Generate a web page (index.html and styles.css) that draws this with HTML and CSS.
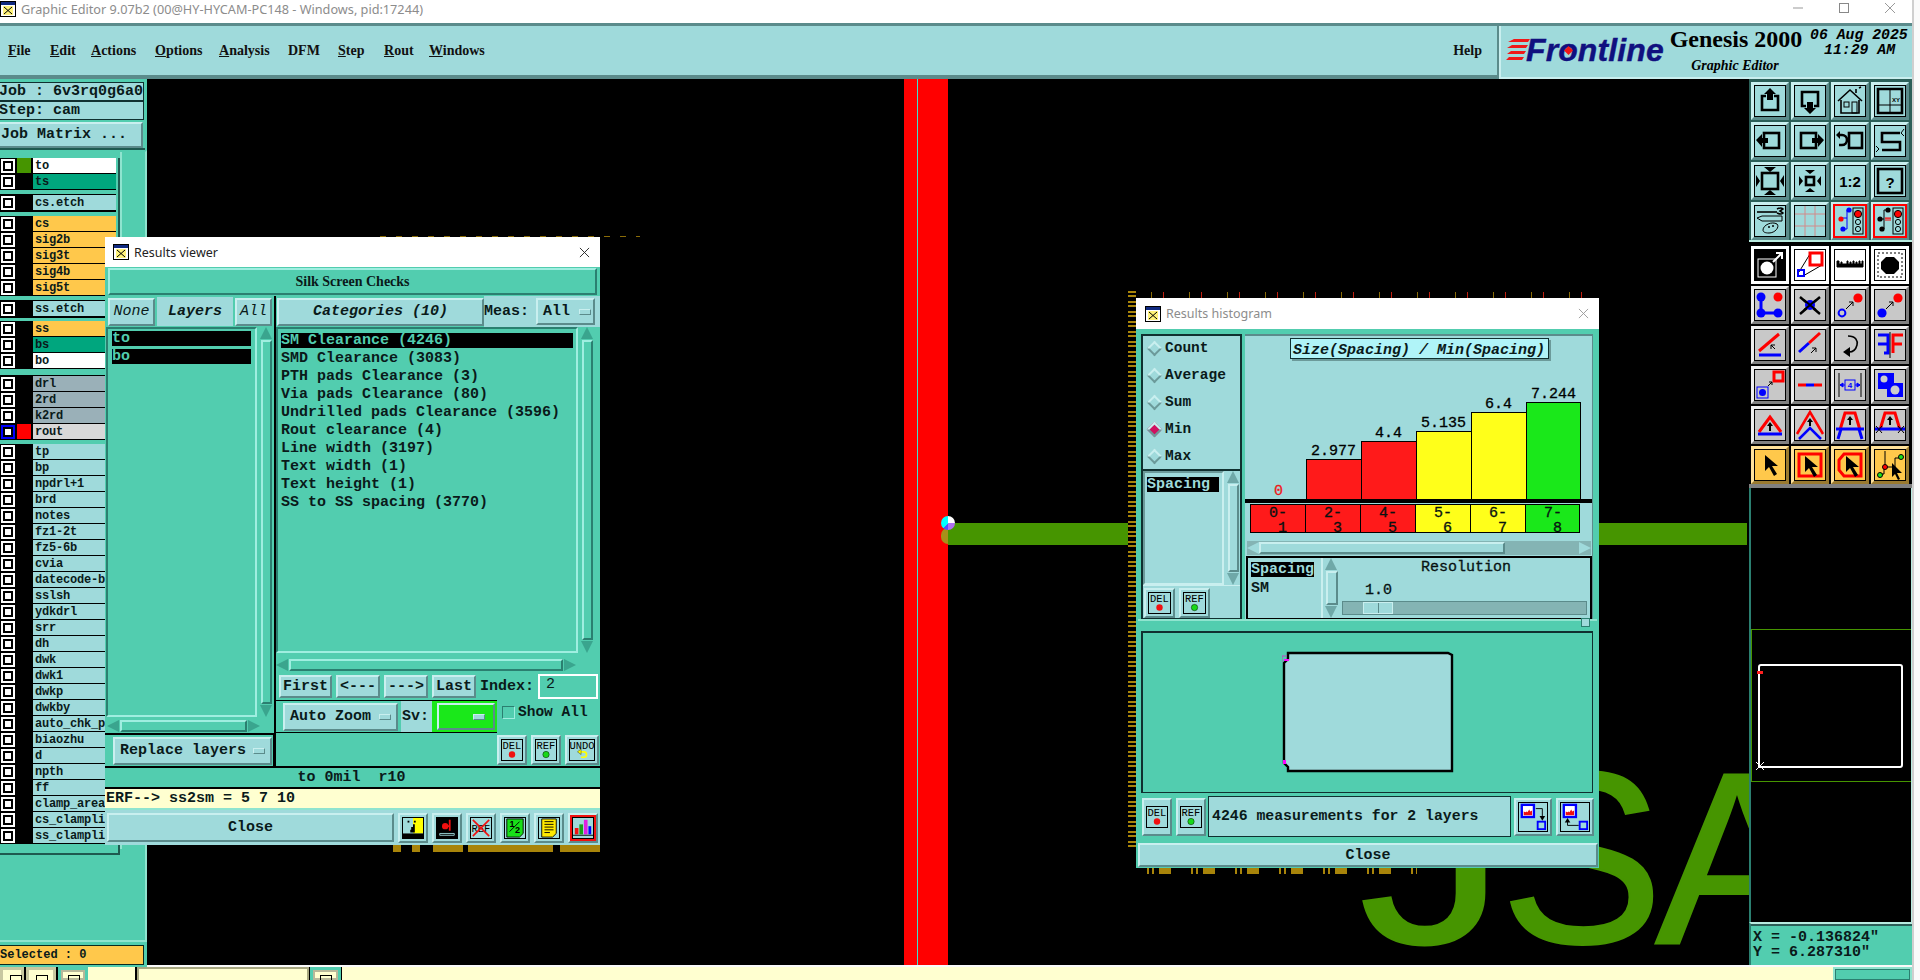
FILE: index.html
```html
<!DOCTYPE html>
<html lang="en">
<head>
<meta charset="utf-8">
<title>Graphic Editor</title>
<link rel="stylesheet" href="styles.css">
</head>
<body>
<div class="app">
  <header class="titlebar">
    <svg class="appicon" viewBox="0 0 16 16"><rect x=".5" y=".5" width="15" height="15" fill="#fff" stroke="#000"/><rect x="1" y="1" width="14" height="3" fill="#102a80"/><rect x="3" y="5" width="10" height="9" fill="#fff27a"/><path d="M4 6l8 7M12 6l-8 7" stroke="#000" fill="none"/></svg>
    <span class="apptitle">Graphic Editor 9.07b2 (00@HY-HYCAM-PC148 - Windows, pid:17244)</span>
    <div class="winbtns">
      <svg viewBox="0 0 46 14"><path d="M0 7h10" stroke="#999" fill="none"/></svg>
      <svg viewBox="0 0 46 14"><rect x=".5" y="2.500" width="9" height="9" stroke="#888" fill="none"/></svg>
      <svg viewBox="0 0 46 14"><path d="M0 2l10 10M10 2L0 12" stroke="#999" fill="none"/></svg>
    </div>
  </header>

  <div class="topbar">
    <nav class="menubar">
      <span class="mi m1"><u>F</u>ile</span>
      <span class="mi m2"><u>E</u>dit</span>
      <span class="mi m3"><u>A</u>ctions</span>
      <span class="mi m4"><u>O</u>ptions</span>
      <span class="mi m5"><u>A</u>nalysis</span>
      <span class="mi m6">DFM</span>
      <span class="mi m7"><u>S</u>tep</span>
      <span class="mi m8"><u>R</u>out</span>
      <span class="mi m9"><u>W</u>indows</span>
      <span class="mi help">Help</span>
    </nav>
    <div class="brand">
      <svg class="speed" viewBox="0 0 24 24"><path d="M8 1h16l-2 3H2zM6 7h16l-2 3H1zM5 13h15l-2 3H1zM3 19h15l-2 3H0z" fill="#f01818"/></svg>
      <span class="frontline">Fr<span class="fo">o<svg class="fodot" viewBox="0 0 8 8"><path d="M4 0l4 4-4 4-4-4z" fill="#f01818"/></svg></span>ntline</span>
      <div class="gen">
        <span class="g2000">Genesis 2000</span>
        <span class="gedit">Graphic Editor</span>
      </div>
      <div class="clock"><span>06 Aug 2025</span><span class="time">11:29 AM</span></div>
    </div>
  </div>

  <div class="middle">
    <aside class="left">
      <div class="info">Job : 6v3rq0g6a0</div>
      <div class="info">Step: cam</div>
      <div class="jobwrap"><div class="jobbtn">Job Matrix ...</div></div>
      <div class="layerpane">
        <div class="layers">
          <div class="lgroup g1">
            <div class="lr"><i class="cb"></i><i class="sw sw-green"></i><span class="ln c-white">to</span></div>
            <div class="lr"><i class="cb"></i><i class="sw"></i><span class="ln c-ts">ts</span></div>
          </div>
          <div class="lgroup g2">
            <div class="lr"><i class="cb"></i><i class="sw"></i><span class="ln c-lt">cs.etch</span></div>
          </div>
          <div class="lgroup g3">
            <div class="lr"><i class="cb"></i><i class="sw"></i><span class="ln c-or">cs</span></div>
            <div class="lr"><i class="cb"></i><i class="sw"></i><span class="ln c-or">sig2b</span></div>
            <div class="lr"><i class="cb"></i><i class="sw"></i><span class="ln c-or">sig3t</span></div>
            <div class="lr"><i class="cb"></i><i class="sw"></i><span class="ln c-or">sig4b</span></div>
            <div class="lr"><i class="cb"></i><i class="sw"></i><span class="ln c-or">sig5t</span></div>
          </div>
          <div class="lgroup g4">
            <div class="lr"><i class="cb"></i><i class="sw"></i><span class="ln c-lt">ss.etch</span></div>
          </div>
          <div class="lgroup g5">
            <div class="lr"><i class="cb"></i><i class="sw"></i><span class="ln c-or">ss</span></div>
            <div class="lr"><i class="cb"></i><i class="sw"></i><span class="ln c-ts">bs</span></div>
            <div class="lr"><i class="cb"></i><i class="sw"></i><span class="ln c-white">bo</span></div>
          </div>
          <div class="lgroup g6">
            <div class="lr"><i class="cb"></i><i class="sw"></i><span class="ln c-gr">drl</span></div>
            <div class="lr"><i class="cb"></i><i class="sw"></i><span class="ln c-gr">2rd</span></div>
            <div class="lr"><i class="cb"></i><i class="sw"></i><span class="ln c-gr">k2rd</span></div>
            <div class="lr"><i class="cb cb-blue"></i><i class="sw sw-red"></i><span class="ln c-rout">rout</span></div>
          </div>
          <div class="lgroup g7">
            <div class="lr"><i class="cb"></i><i class="sw"></i><span class="ln c-lt">tp</span></div>
            <div class="lr"><i class="cb"></i><i class="sw"></i><span class="ln c-lt">bp</span></div>
            <div class="lr"><i class="cb"></i><i class="sw"></i><span class="ln c-lt">npdrl+1</span></div>
            <div class="lr"><i class="cb"></i><i class="sw"></i><span class="ln c-lt">brd</span></div>
            <div class="lr"><i class="cb"></i><i class="sw"></i><span class="ln c-lt">notes</span></div>
            <div class="lr"><i class="cb"></i><i class="sw"></i><span class="ln c-lt">fz1-2t</span></div>
            <div class="lr"><i class="cb"></i><i class="sw"></i><span class="ln c-lt">fz5-6b</span></div>
            <div class="lr"><i class="cb"></i><i class="sw"></i><span class="ln c-lt">cvia</span></div>
            <div class="lr"><i class="cb"></i><i class="sw"></i><span class="ln c-lt">datecode-b</span></div>
            <div class="lr"><i class="cb"></i><i class="sw"></i><span class="ln c-lt">sslsh</span></div>
            <div class="lr"><i class="cb"></i><i class="sw"></i><span class="ln c-lt">ydkdrl</span></div>
            <div class="lr"><i class="cb"></i><i class="sw"></i><span class="ln c-lt">srr</span></div>
            <div class="lr"><i class="cb"></i><i class="sw"></i><span class="ln c-lt">dh</span></div>
            <div class="lr"><i class="cb"></i><i class="sw"></i><span class="ln c-lt">dwk</span></div>
            <div class="lr"><i class="cb"></i><i class="sw"></i><span class="ln c-lt">dwk1</span></div>
            <div class="lr"><i class="cb"></i><i class="sw"></i><span class="ln c-lt">dwkp</span></div>
            <div class="lr"><i class="cb"></i><i class="sw"></i><span class="ln c-lt">dwkby</span></div>
            <div class="lr"><i class="cb"></i><i class="sw"></i><span class="ln c-lt">auto_chk_p</span></div>
            <div class="lr"><i class="cb"></i><i class="sw"></i><span class="ln c-lt">biaozhu</span></div>
            <div class="lr"><i class="cb"></i><i class="sw"></i><span class="ln c-lt">d</span></div>
            <div class="lr"><i class="cb"></i><i class="sw"></i><span class="ln c-lt">npth</span></div>
            <div class="lr"><i class="cb"></i><i class="sw"></i><span class="ln c-lt">ff</span></div>
            <div class="lr"><i class="cb"></i><i class="sw"></i><span class="ln c-lt">clamp_area</span></div>
            <div class="lr"><i class="cb"></i><i class="sw"></i><span class="ln c-lt">cs_clampli</span></div>
            <div class="lr"><i class="cb"></i><i class="sw"></i><span class="ln c-lt">ss_clampli</span></div>
          </div>
        </div>
      </div>
      <div class="selected">Selected : 0</div>
    </aside>

    <main class="canvas">
      <div class="rout-band"></div>
      <div class="rout-line"></div>
      <div class="trace"></div>
      <div class="pad-gold"></div>
      <div class="pad-dot"></div>
      <span class="glyph gj">J</span>
      <span class="glyph gs">S</span>
      <span class="glyph ga">A</span>
      <div class="pcb pcb-left"></div>
      <div class="pcb pcb-top"></div>
      <div class="pcb pcb-bot"></div>
      <div class="pcb pcb-vt"></div>
      <div class="gold g-a"></div>
      <div class="gold g-b"></div>
      <div class="gold g-c"></div>
      <div class="gold g-d"></div>
      <div class="gold g-e"></div>
    </main>

    <aside class="right">
      <div class="tools t1">
        <div class="tb"><div class="fr"><svg viewBox="0 0 30 30"><path class="k3" d="M11 10H7v14h16V10h-4"/><path d="M15 2l6 6h-3v6h-6V8H9z"/></svg></div></div>
        <div class="tb"><div class="fr"><svg viewBox="0 0 30 30"><path class="k3" d="M11 20H7V6h16v14h-4"/><path d="M15 28l-6-6h3v-6h6v6h3z"/></svg></div></div>
        <div class="tb"><div class="fr"><svg viewBox="0 0 30 30"><path class="k2" d="M3 15L15 4l12 11M6 14v13h18V14M21 7V3M24 2l2-1"/><rect class="k1" x="9" y="16" width="5" height="5"/><rect class="k1" x="17" y="16" width="5" height="11"/></svg></div></div>
        <div class="tb"><div class="fr"><svg viewBox="0 0 30 30"><path class="k3" d="M3 3h24v24H3z"/><path class="k1" d="M15 3v24M3 19h24"/><text class="tiny" x="17" y="16">XY</text></svg></div></div>
        <div class="tb"><div class="fr"><svg viewBox="0 0 30 30"><rect class="k3" x="9" y="7" width="15" height="15"/><path d="M1 14l6-6v4h6v5H7v4z"/></svg></div></div>
        <div class="tb"><div class="fr"><svg viewBox="0 0 30 30"><rect class="k3" x="6" y="7" width="15" height="15"/><path d="M29 14l-6-6v4h-6v5h6v4z"/></svg></div></div>
        <div class="tb"><div class="fr"><svg viewBox="0 0 30 30"><rect class="k3" x="14" y="7" width="13" height="15"/><path class="k3" d="M3 9h4a5 5 0 0 1 0 10H4"/><path d="M1 9l4-4v8z"/></svg></div></div>
        <div class="tb"><div class="fr"><svg viewBox="0 0 30 30"><path class="k3" d="M25 7H7v9h18v8H7"/><path class="k1" d="M29 3l-3 4 3 3M1 20l3 3-3 3"/></svg></div></div>
        <div class="tb"><div class="fr"><svg viewBox="0 0 30 30"><rect class="k3" x="7" y="7" width="16" height="16"/><path d="M15 6l-6-5h12zM15 24l-6 5h12zM5 15L1 9v12zM25 15l4-6v12z"/></svg></div></div>
        <div class="tb"><div class="fr"><svg viewBox="0 0 30 30"><rect class="k3" x="11" y="11" width="8" height="8"/><path d="M15 8l-5-4h10zM15 22l-5 4h10zM8 15L4 10v10zM22 15l4-5v10z"/></svg></div></div>
        <div class="tb"><div class="fr"><svg viewBox="0 0 30 30"><text class="ratio" x="15" y="21">1:2</text></svg></div></div>
        <div class="tb"><div class="fr"><svg viewBox="0 0 30 30"><rect class="k3" x="3" y="3" width="24" height="24"/><text class="ratio" x="15" y="22">?</text></svg></div></div>
        <div class="tb"><div class="fr"><svg viewBox="0 0 30 30"><path class="k2" d="M2 6h20"/><path class="k2" d="M22 3c4-2 6 0 6 0l-3 2 3 2s-2 2-6 0"/><path class="k1" d="M27 10v5H7L2 12l5-2z"/><path class="k1" d="M8 24c0-5 9-9 14-6 3 3-2 9-8 9-4 0-6-1-6-3z"/><circle cx="14" cy="21" r="1"/><circle cx="18" cy="20" r="1"/></svg></div></div>
        <div class="tb"><div class="fr"><svg viewBox="0 0 30 30"><path d="M0 8h30M0 20h30M10 0v30M20 0v30" stroke="#d28a8a" fill="none"/></svg></div></div>
        <div class="tb tb-red"><div class="fr"><svg viewBox="0 0 30 30"><path d="M7 12h5V4h2M12 12v11H8" fill="none" stroke="#0000ff"/><circle cx="14" cy="4" r="2.600" fill="#00f"/><circle cx="8" cy="23" r="2.600" fill="#00f"/><circle cx="6" cy="13" r="2.600" fill="#f00"/><rect class="k1" x="18" y="2" width="10" height="26"/><circle cx="23" cy="8" r="3.600" fill="#f00" stroke="#000"/><circle class="k1" cx="23" cy="16" r="2.600"/><circle class="k1" cx="23" cy="23" r="2.600"/></svg></div></div>
        <div class="tb tb-red"><div class="fr"><svg viewBox="0 0 30 30"><path class="k1" d="M5 13h4V4h4M9 13v10H7"/><path d="M10 12h6M11 12v3M13 12v3M15 12v3" stroke="#f00" fill="none"/><circle cx="13" cy="4" r="2.600"/><circle cx="7" cy="23" r="2.600"/><circle cx="5" cy="13" r="2.600"/><rect class="k1" x="18" y="2" width="10" height="26"/><circle cx="23" cy="8" r="3.600" fill="#f00" stroke="#000"/><circle class="k1" cx="23" cy="16" r="2.600"/><circle class="k1" cx="23" cy="23" r="2.600"/></svg></div></div>
      </div>
      <div class="tools t2">
        <div class="tb tb-w"><div class="fr fr-k"><svg viewBox="0 0 30 30"><rect x="3" y="9" width="18" height="18" fill="none" stroke="#fff"/><circle cx="12" cy="18" r="6.500" fill="#fff"/><path d="M18 12l8-8M21 3h6v6" fill="none" stroke="#fff" stroke-width="2"/></svg></div></div>
        <div class="tb tb-w"><div class="fr"><svg viewBox="0 0 30 30"><path class="k1" d="M4 22L15 4M8 26l19-11"/><rect x="15" y="3" width="12" height="12" fill="none" stroke="#f00" stroke-width="3"/><rect x="3" y="20" width="6" height="6" fill="none" stroke="#00f" stroke-width="2"/></svg></div></div>
        <div class="tb tb-w"><div class="fr"><svg viewBox="0 0 30 30"><path d="M2 11v6h26v-6h-1v3h-2v-3h-1v3h-2v-2h-1v2h-2v-3h-1v3h-2v-2h-1v2h-2v-3h-1v3H7v-2H6v2H4v-3z" stroke="#000" stroke-width="1"/></svg></div></div>
        <div class="tb tb-w"><div class="fr"><svg viewBox="0 0 30 30"><rect x="3" y="3" width="24" height="24" fill="none" stroke="#000" stroke-dasharray="2 2"/><path d="M11 7h8l5 5v7l-5 5h-8l-5-5v-7z"/></svg></div></div>

        <div class="tb tb-g"><div class="fr"><svg viewBox="0 0 30 30"><path d="M6 6v17h17" fill="none" stroke="#00f" stroke-width="3"/><circle cx="6" cy="7" r="4.500" fill="#00f"/><circle cx="6" cy="23" r="4.500" fill="#00f"/><circle cx="23" cy="23" r="4.500" fill="#00f"/><circle cx="23" cy="7" r="4.500" fill="#f00"/></svg></div></div>
        <div class="tb tb-g"><div class="fr"><svg viewBox="0 0 30 30"><path d="M5 7l20 17M25 7L5 24" stroke="#000" stroke-width="2.400"/><circle cx="15" cy="15" r="5" fill="#00f"/><path d="M9 10l12 10M21 10L9 20" stroke="#000" stroke-width="2"/></svg></div></div>
        <div class="tb tb-g"><div class="fr"><svg viewBox="0 0 30 30"><circle cx="23" cy="8" r="4.600" fill="#f00"/><circle cx="7" cy="23" r="3.400" fill="none" stroke="#00f" stroke-width="2"/><path class="k1" d="M11 19l7-7M14 12h4v4"/></svg></div></div>
        <div class="tb tb-g"><div class="fr"><svg viewBox="0 0 30 30"><circle cx="23" cy="8" r="4.600" fill="#f00"/><circle cx="7" cy="23" r="4.600" fill="#00f"/><path class="k1" d="M11 19l7-7M14 12h4v4"/></svg></div></div>

        <div class="tb tb-g"><div class="fr"><svg viewBox="0 0 30 30"><path d="M4 21L24 4" stroke="#f00" stroke-width="3"/><path d="M4 25h22" stroke="#00f" stroke-width="3"/><path class="k1" d="M20 19l-4-4M16 19v-4h4"/></svg></div></div>
        <div class="tb tb-g"><div class="fr"><svg viewBox="0 0 30 30"><path d="M4 22l10-9" stroke="#00f" stroke-width="3"/><path d="M14 13L25 3" stroke="#f00" stroke-width="3"/><path class="k1" d="M16 23l5-5M17 18h4v4"/></svg></div></div>
        <div class="tb tb-g"><div class="fr"><svg viewBox="0 0 30 30"><path class="k2" d="M13 6c8 0 10 5 9 9-1 4-4 7-8 7"/><path d="M8 22l7-5v10z"/></svg></div></div>
        <div class="tb tb-g"><div class="fr"><svg viewBox="0 0 30 30"><path d="M3 5h10v18H9M3 14h10" fill="none" stroke="#00f" stroke-width="3"/><path d="M15 2v26" stroke="#000"/><path d="M18 23V5h10M18 14h9" fill="none" stroke="#f00" stroke-width="3"/></svg></div></div>

        <div class="tb tb-g"><div class="fr"><svg viewBox="0 0 30 30"><rect x="19" y="2" width="9" height="9" fill="#ccc" stroke="#f00" stroke-width="3"/><rect x="2" y="17" width="11" height="11" fill="none" stroke="#00f"/><circle cx="7.500" cy="22.500" r="3.500" fill="#00f"/><path class="k1" d="M13 16l4-4M14 12h3v3"/></svg></div></div>
        <div class="tb tb-g"><div class="fr"><svg viewBox="0 0 30 30"><path d="M3 15h8" stroke="#f00" stroke-width="3"/><path d="M11 15h8" stroke="#00f" stroke-width="3"/><path d="M19 15h8" stroke="#f00" stroke-width="3"/></svg></div></div>
        <div class="tb tb-g"><div class="fr"><svg viewBox="0 0 30 30"><path d="M4 3v24M26 3v24" stroke="#000"/><path d="M5 15h5M20 15h5M5 15l3-2v4zM25 15l-3-2v4z" stroke="#00f" fill="#00f"/><rect x="10" y="10" width="10" height="10" fill="none" stroke="#00f"/><text class="tinyb" x="15" y="18">4</text></svg></div></div>
        <div class="tb tb-g"><div class="fr"><svg viewBox="0 0 30 30"><path d="M3 3h16v10h9v14H12v-8H3z" fill="#00f"/><circle cx="9" cy="9" r="3.500" fill="#ccc"/><circle cx="20" cy="20" r="4.500" fill="#ccc"/></svg></div></div>

        <div class="tb tb-g"><div class="fr"><svg viewBox="0 0 30 30"><path d="M4 22L15 7l11 15" fill="none" stroke="#f00" stroke-width="3"/><path d="M3 24h24" stroke="#00f" stroke-width="3"/><path d="M15 12l-3 4h2v5h2v-5h2z"/></svg></div></div>
        <div class="tb tb-g"><div class="fr"><svg viewBox="0 0 30 30"><path d="M2 24L15 2l13 22" fill="none" stroke="#f00" stroke-width="2.500"/><path d="M4 29l11-11 11 11" fill="none" stroke="#00f" stroke-width="2.500"/><path d="M15 8l-3 4h2v4h2v-4h2z"/></svg></div></div>
        <div class="tb tb-g"><div class="fr"><svg viewBox="0 0 30 30"><path d="M5 20L10 3h10l5 17" fill="none" stroke="#f00" stroke-width="3"/><path d="M1 19h28" stroke="#00f" stroke-width="3"/><path d="M3 29l3-10M27 29l-3-10" stroke="#00f" stroke-width="3"/><path d="M15 6l-3 4h2v5h2v-5h2z"/></svg></div></div>
        <div class="tb tb-g"><div class="fr"><svg viewBox="0 0 30 30"><path d="M5 20L10 3h10l5 17" fill="none" stroke="#f00" stroke-width="3"/><path d="M0 19h30" stroke="#00f" stroke-width="3"/><path class="k1" d="M1 16l6 7M7 16l-6 7M23 16l6 7M29 16l-6 7"/><path d="M15 6l-3 4h2v5h2v-5h2z"/></svg></div></div>

        <div class="tb tb-o"><div class="fr"><svg viewBox="0 0 30 30"><path d="M10 5v16l4-4 5 9 3-2-5-8h6z"/></svg></div></div>
        <div class="tb tb-o"><div class="fr"><svg viewBox="0 0 30 30"><rect x="4" y="4" width="22" height="22" fill="none" stroke="#f00" stroke-width="3"/><path d="M10 6v16l4-4 5 9 3-2-5-8h6z"/></svg></div></div>
        <div class="tb tb-o"><div class="fr"><svg viewBox="0 0 30 30"><path d="M9 4h17v22H9l-5-6V10z" fill="none" stroke="#f00" stroke-width="3"/><path d="M11 6v16l4-4 5 9 3-2-5-8h6z"/></svg></div></div>
        <div class="tb tb-o"><div class="fr"><svg viewBox="0 0 30 30"><path class="k1" d="M10 1v16M5 24h4v-7h11V8h6"/><circle cx="10" cy="17" r="2.500" fill="#f00" stroke="#000"/><circle cx="5" cy="25" r="2.500" fill="#1ae01a" stroke="#000"/><circle cx="26" cy="7" r="2.500" fill="#1ae01a" stroke="#000"/><path d="M17 13v14l3-3 3 6 2-1-3-6h5z"/></svg></div></div>
      </div>
      <div class="overview">
        <div class="ov-box"><div class="ov-board"><i class="ov-mark"></i><svg class="ov-x" viewBox="0 0 8 8"><path d="M0 0l8 8M8 0L0 8" stroke="#fff" fill="none"/></svg></div></div>
      </div>
      <div class="coords"><div>X = -0.136824"</div><div>Y = 6.287310"</div></div>
    </aside>
  </div>

  <footer class="bottom">
    <div class="bbtn w1"><i></i></div>
    <div class="bbtn w2"><i></i></div>
    <div class="bbtn w3 teal"><i></i></div>
    <div class="bcream w4"></div>
    <div class="binput"></div>
    <div class="bbtn w5 teal"><i></i></div>
    <div class="bcream grow"></div>
    <div class="bteal"></div>
  </footer>
</div>

<section class="win rv">
  <div class="wintitle">
    <svg class="appicon" viewBox="0 0 16 16"><rect x=".5" y=".5" width="15" height="15" fill="#fff" stroke="#000"/><rect x="1" y="1" width="14" height="3" fill="#102a80"/><rect x="3" y="5" width="10" height="9" fill="#fff27a"/><path d="M4 6l8 7M12 6l-8 7" stroke="#000" fill="none"/></svg>
    <span class="wt-text active">Results viewer</span>
    <svg class="winx" viewBox="0 0 12 12"><path d="M1 1l10 10M11 1L1 11" stroke="#222" fill="none"/></svg>
  </div>
  <div class="banner">Silk Screen Checks</div>
  <div class="rv-mid">
    <div class="rv-l">
      <div class="rv-head">
        <button class="btn it none">None</button>
        <span class="rv-layers">Layers</span>
        <button class="btn it all">All</button>
      </div>
      <div class="rv-listwrap">
        <div class="list rvlist-l">
          <div class="sel">to</div>
          <div class="sel">bo</div>
        </div>
        <div class="vs"><i class="au"></i><b></b><i class="ad"></i></div>
      </div>
      <div class="hs hs-l"><i class="al"></i><b></b><i class="ar"></i></div>
      <div class="replace"><button class="btn repl">Replace layers<i class="dd"></i></button></div>
    </div>
    <div class="rv-r">
      <div class="rv-head2">
        <button class="btn it cats">Categories (10)</button>
        <span class="meas">Meas:</span>
        <button class="btn ddb">All<i class="dd"></i></button>
      </div>
      <div class="rv-listwrap2">
        <div class="list rvlist-r">
          <div class="sel wide">SM Clearance (4246)</div>
          <div class="it-row">SMD Clearance (3083)</div>
          <div class="it-row">PTH pads Clearance (3)</div>
          <div class="it-row">Via pads Clearance (80)</div>
          <div class="it-row">Undrilled pads Clearance (3596)</div>
          <div class="it-row">Rout clearance (4)</div>
          <div class="it-row">Line width (3197)</div>
          <div class="it-row">Text width (1)</div>
          <div class="it-row">Text height (1)</div>
          <div class="it-row">SS to SS spacing (3770)</div>
        </div>
        <div class="vs"><i class="au"></i><b></b><i class="ad"></i></div>
      </div>
      <div class="hs hs-r"><i class="al"></i><b></b><i class="ar"></i></div>
      <div class="navrow">
        <button class="btn nav">First</button>
        <button class="btn nav">&lt;---</button>
        <button class="btn nav">---&gt;</button>
        <button class="btn nav">Last</button>
        <span class="idx">Index:</span>
        <span class="idxval">2</span>
      </div>
      <div class="zoomrow">
        <div class="zoomgroup">
          <button class="btn azoom">Auto Zoom<i class="dd"></i></button>
          <span class="sv">Sv:</span>
          <div class="svgreen"><button class="btn svbtn"><i class="dd"></i></button></div>
        </div>
        <label class="showall"><i class="chk"></i>Show All</label>
      </div>
      <div class="actrow">
        <div class="ib"><div class="fr fr-s"><svg viewBox="0 0 22 22"><text class="lbl" x="11" y="10">DEL</text><circle cx="11" cy="16" r="3.500" fill="#f01010"/></svg></div></div>
        <div class="ib"><div class="fr fr-s"><svg viewBox="0 0 22 22"><text class="lbl" x="11" y="10">REF</text><circle cx="11" cy="16" r="3.500" fill="#18d818" stroke="#000" stroke-width=".5"/></svg></div></div>
        <div class="ib ib-w"><div class="fr fr-w"><svg viewBox="0 0 26 22"><text class="lbl" x="13" y="10">UNDO</text><path d="M10 13h5a3 3 0 0 1 0 6h-3" fill="none" stroke="#ff0" stroke-width="1.800"/><path d="M12 10l-4 3 4 3z" fill="#ff0" stroke="#000" stroke-width=".4"/></svg></div></div>
      </div>
    </div>
  </div>
  <div class="statusrow">to 0mil&nbsp;&nbsp;r10</div>
  <div class="erfrow">ERF--&gt; ss2sm = 5 7 10</div>
  <div class="closerow">
    <button class="btn closebtn">Close</button>
    <div class="ib"><div class="fr fr-s"><svg viewBox="0 0 22 22"><rect x="0" y="0" width="11" height="17" fill="#a0dcdc"/><rect x="11" y="0" width="11" height="17" fill="#ff0"/><rect x="0" y="17" width="22" height="5"/><path d="M8 16h5V7h-2v3H9v3H8z"/><rect x="5" y="3" width="2" height="2"/><rect x="12" y="3" width="2" height="2"/></svg></div></div>
    <div class="ib"><div class="fr fr-s fr-ink"><svg viewBox="0 0 22 22"><rect x="3" y="2" width="16" height="13" fill="none"/><circle cx="9" cy="9" r="3.500" fill="#f01010"/><path d="M9 9h5M14 2v12" stroke="#f01010" stroke-width="2"/><path d="M3 17h16v2H3z" fill="none" stroke="#9fdadb"/></svg></div></div>
    <div class="ib"><div class="fr fr-s"><svg viewBox="0 0 22 22"><text class="lbl" x="11" y="15">REF</text><path d="M2 2l18 18M20 2L2 20" stroke="#f01010" stroke-width="1.800"/></svg></div></div>
    <div class="ib"><div class="fr fr-s"><svg viewBox="0 0 22 22"><path d="M2 1h18v16l-4 4H2z" fill="#18e018" stroke="#000"/><text class="half" x="5" y="10">1</text><text class="half" x="11" y="16">2</text><path d="M5 15L16 4" stroke="#000"/></svg></div></div>
    <div class="ib"><div class="fr fr-s"><svg viewBox="0 0 22 22"><path d="M3 1h16v16l-4 4H3z" fill="#ffea00" stroke="#000"/><path d="M6 4h10M6 7h10M6 10h10M6 13h10M6 16h6" stroke="#000"/></svg></div></div>
    <div class="ib ib-red"><div class="fr fr-s fr-redb"><svg viewBox="0 0 22 22"><rect x="2" y="11" width="4" height="7" fill="#f01010"/><rect x="7" y="7" width="4" height="11" fill="#18a018"/><rect x="12" y="2" width="4" height="16" fill="#e020e0"/><rect x="17" y="9" width="3" height="9" fill="#00f"/><path d="M0 19h22" stroke="#000"/></svg></div></div>
  </div>
</section>

<section class="win rh">
  <div class="wintitle tall">
    <svg class="appicon big" viewBox="0 0 16 16"><rect x=".5" y=".5" width="15" height="15" fill="#fff" stroke="#000"/><rect x="1" y="1" width="14" height="3" fill="#102a80"/><rect x="3" y="5" width="10" height="9" fill="#fff27a"/><path d="M4 6l8 7M12 6l-8 7" stroke="#000" fill="none"/></svg>
    <span class="wt-text">Results histogram</span>
    <svg class="winx" viewBox="0 0 12 12"><path d="M1 1l10 10M11 1L1 11" stroke="#999" fill="none"/></svg>
  </div>
  <div class="rh-top">
    <div class="rh-left">
      <div class="radios">
        <div class="radio"><i class="dia"></i>Count</div>
        <div class="radio"><i class="dia"></i>Average</div>
        <div class="radio"><i class="dia"></i>Sum</div>
        <div class="radio"><i class="dia on"></i>Min</div>
        <div class="radio"><i class="dia"></i>Max</div>
      </div>
      <div class="rh-listwrap">
        <div class="rh-list"><span class="selh">Spacing</span></div>
        <div class="vs lt"><i class="au"></i><b></b><i class="ad"></i></div>
      </div>
      <div class="rh-btns">
        <div class="ib lt"><div class="fr fr-s"><svg viewBox="0 0 22 22"><text class="lbl" x="11" y="10">DEL</text><circle cx="11" cy="16" r="3.500" fill="#f01010"/></svg></div></div>
        <div class="ib lt"><div class="fr fr-s"><svg viewBox="0 0 22 22"><text class="lbl" x="11" y="10">REF</text><circle cx="11" cy="16" r="3.500" fill="#18d818" stroke="#000" stroke-width=".5"/></svg></div></div>
      </div>
    </div>
    <div class="rh-chart">
      <div class="chart-title">Size(Spacing) / Min(Spacing)</div>
      <div class="bars">
        <div class="barcol"><span class="bv zero">0</span></div>
        <div class="barcol"><span class="bv">2.977</span><div class="bar red" style="height:40px"></div></div>
        <div class="barcol"><span class="bv">4.4</span><div class="bar red" style="height:58px"></div></div>
        <div class="barcol"><span class="bv">5.135</span><div class="bar yel" style="height:68px"></div></div>
        <div class="barcol"><span class="bv">6.4</span><div class="bar yel" style="height:87px"></div></div>
        <div class="barcol"><span class="bv">7.244</span><div class="bar grn" style="height:97px"></div></div>
      </div>
      <div class="bins">
        <div class="bin red"><span>0-</span><span class="n2">1</span></div>
        <div class="bin red"><span>2-</span><span class="n2">3</span></div>
        <div class="bin red"><span>4-</span><span class="n2">5</span></div>
        <div class="bin yel"><span>5-</span><span class="n2">6</span></div>
        <div class="bin yel"><span>6-</span><span class="n2">7</span></div>
        <div class="bin grn"><span>7-</span><span class="n2">8</span></div>
      </div>
      <div class="hs hs-h"><i class="al"></i><b></b><u></u><i class="ar"></i></div>
      <div class="rh-sub">
        <div class="rh-slist"><span class="selh">Spacing</span><span class="plain">SM</span></div>
        <div class="vs lt vs-s"><i class="au"></i><b></b><i class="ad"></i></div>
        <div class="reso">
          <div class="reso-t">Resolution</div>
          <div class="reso-v">1.0</div>
          <div class="slider"><b></b></div>
        </div>
      </div>
    </div>
  </div>
  <div class="sash"><i></i></div>
  <div class="preview">
    <svg class="board" viewBox="0 0 172 122"><path d="M6 2h160l4 2v116H6v-4l-4-4V12l4-4z" fill="#9fdadb" stroke="#000" stroke-width="2.400"/><path d="M0 11V5h5" fill="none" stroke="#c040c0"/><rect x="2" y="8" width="5" height="2" fill="#f0f"/><rect x="1" y="109" width="3" height="4" fill="#f0f"/></svg>
  </div>
  <div class="rh-status">
    <div class="ib lt"><div class="fr fr-s"><svg viewBox="0 0 22 22"><text class="lbl" x="11" y="10">DEL</text><circle cx="11" cy="16" r="3.500" fill="#f01010"/></svg></div></div>
    <div class="ib lt"><div class="fr fr-s"><svg viewBox="0 0 22 22"><text class="lbl" x="11" y="10">REF</text><circle cx="11" cy="16" r="3.500" fill="#18d818" stroke="#000" stroke-width=".5"/></svg></div></div>
    <div class="msg">4246 measurements for 2 layers</div>
    <div class="ib lt big"><div class="fr fr-b"><svg viewBox="0 0 30 30"><rect x="3" y="2" width="13" height="13" fill="#fff" stroke="#00f" stroke-width="2.500"/><path d="M5 13v-4l2 1 1-1 1 1 2-3 1 2 2-1v5z" fill="#f01010"/><path class="k1" d="M18 6h7v8"/><path d="M25 19l-3-5h6z"/><rect x="20" y="20" width="8" height="8" fill="none" stroke="#00f" stroke-width="2"/></svg></div></div>
    <div class="ib lt big"><div class="fr fr-b"><svg viewBox="0 0 30 30"><rect x="3" y="2" width="13" height="13" fill="#fff" stroke="#00f" stroke-width="2.500"/><path d="M5 13v-4l2 1 1-1 1 1 2-3 1 2 2-1v5z" fill="#f01010"/><path class="k1" d="M7 19v5h12"/><path d="M7 16l-3 5h6z"/><rect x="20" y="20" width="8" height="8" fill="none" stroke="#00f" stroke-width="2"/></svg></div></div>
  </div>
  <button class="btn hclose">Close</button>
</section>
</body>
</html>
```

FILE: styles.css
```css
* { box-sizing: border-box; }
html, body { margin: 0; padding: 0; }
body { width: 1920px; height: 980px; overflow: hidden; background: #fafafa; position: relative; font-family: "Liberation Mono", monospace; font-weight: 700; font-size: 15px; color: #0a1a1a; }
i { font-style: normal; }
.app { width: 1912px; height: 980px; display: flex; flex-direction: column; box-shadow: 2px 0 0 #cfcfcf; }

/* title bar */
.titlebar { height: 23px; background: #fff; display: flex; align-items: center; flex: none; position: relative; }
.appicon { width: 16px; height: 16px; flex: none; }
.titlebar .appicon { margin-top: -6px; }
.apptitle { margin-left: 5px; margin-top: -6px; font: 400 12.700px "Noto Sans", sans-serif; color: #8c8c8c; }
.winbtns { margin-left: auto; display: flex; width: 138px; margin-right: -19px; margin-top: -8px; flex: none; }
.winbtns svg { width: 46px; height: 14px; flex: none; }

/* menu */
.topbar { height: 56px; flex: none; display: flex; background: #5b8b8b; padding-top: 3px; }
.menubar { width: 1497px; height: 49px; background: #9fdadb; position: relative; display: flex; align-items: center; font: 700 14px "Liberation Serif", serif; color: #111; padding-left: 8px; }
.mi { flex: none; }
.m1 { width: 42px; } .m2 { width: 41px; } .m3 { width: 64px; } .m4 { width: 64px; } .m5 { width: 69px; } .m6 { width: 50px; } .m7 { width: 46px; } .m8 { width: 45px; }
.help { margin-left: auto; margin-right: 15px; }
.brand { margin-left: 2px; width: 413px; height: 53px; background: #9fdadb; border-left: 2px solid #c9efef; border-bottom: 2px solid #c9efef; position: relative; display: flex; align-items: flex-start; }
.speed { width: 24px; height: 24px; margin: 12px 0 0 5px; flex: none; }
.frontline { font: italic 700 32px/1 "Liberation Sans", sans-serif; color: #10107f; -webkit-text-stroke: .4px #10107f; margin: 8px 0 0 -4px; width: 141px; flex: none; letter-spacing: .1px; }
.fo { position: relative; display: inline-block; }
.fodot { position: absolute; left: 6px; top: 12px; width: 9px; height: 9px; }
.gen { display: flex; flex-direction: column; align-items: center; width: 138px; flex: none; }
.g2000 { font: 700 24px/26px "Liberation Serif", serif; color: #000; white-space: nowrap; }
.gedit { font: italic 700 14px/18px "Liberation Serif", serif; color: #000; margin-top: 5px; margin-left: -2px; }
.clock { display: flex; flex-direction: column; font: italic 700 14.800px/15px "Liberation Mono", monospace; color: #000; margin: 2px 0 0 5px; white-space: nowrap; }
.time { margin-left: 14px; }

/* middle */
.middle { flex: 1; min-height: 0; display: flex; }
.left { width: 147px; flex: none; background: #52cdaf; padding-top: 3px; overflow: hidden; display: flex; flex-direction: column; }
.info { width: 145px; height: 19px; flex: none; background: #9fdadb; border: 1px solid #103030; border-left: 0; font-size: 15px; line-height: 17px; margin-left: -1px; white-space: pre; }
.jobwrap { height: 30px; flex: none; border-top: 2px solid #52cdaf; border-bottom: 2px solid #1e5a50; width: 145px; }
.jobbtn { width: 143px; height: 26px; background: #9fdadb; border: 2px solid; border-color: #c9efef #5b8b8b #5b8b8b #c9efef; border-left: 0; line-height: 22px; padding-left: 1px; font-size: 15px; white-space: pre; }
.layerpane { height: 792px; flex: none; padding: 6px 0 0; border-top: 2px solid #52cdaf; border-right: 2px solid #8fe4cf; border-bottom: 2px solid #8fe4cf; position: relative; }
.layerpane::after { content: ""; position: absolute; left: 120px; top: 0; height: 697px; width: 2px; background: #8fe4cf; }
.layers { width: 120px; height: 697px; display: flex; flex-direction: column; border-right: 2px solid #1e5a50; border-bottom: 2px solid #1e5a50; }
.lgroup { background: #000; width: 116px; }
.g2 { margin-top: 4px; padding-top: 1px; }
.g3 { margin-top: 4px; }
.g4 { margin-top: 4px; padding-top: 1px; }
.g5 { margin-top: 3px; }
.g6 { margin-top: 6px; padding-top: 1px; }
.g7 { margin-top: 4px; }
.lr { height: 16px; display: grid; grid-template-columns: 17px 16px 83px; align-items: center; font-size: 12px; letter-spacing: -.2px; padding-bottom: 1px; }
.g2 .lr, .g4 .lr { height: 17px; padding-bottom: 2px; }
.cb { display: block; width: 14px; height: 14px; margin-left: 1px; border: 2px solid #fff; background: #000; padding: 2px; position: relative; }
.cb::after { content: ""; display: block; width: 6px; height: 6px; background: #fff; }
.cb-blue { border-color: #0000ff; }
.sw { display: block; width: 14px; height: 15px; }
.sw-green { background: #469500; }
.sw-red { background: #ff0000; }
.ln { display: block; height: 15px; line-height: 16px; padding-left: 2px; overflow: hidden; white-space: nowrap; }
.c-white { background: #fff; }
.c-ts { background: #00a67e; }
.c-lt { background: #9fdadb; }
.c-or { background: #ffc84b; }
.c-gr { background: #9ab0b8; }
.c-rout { background: #d8d8d8; }
.selected { height: 20px; width: 144px; flex: none; margin-top: 3px; background: #ffc84b; border: 1px solid #0a2a20; border-left: 0; font-size: 12px; line-height: 18px; white-space: pre; }

/* canvas */
.canvas { flex: 1; min-width: 0; background: #000; position: relative; overflow: hidden; margin-bottom: 2px; }
.rout-band { position: absolute; left: 757px; top: 0; bottom: 0; width: 44px; background: #ff0000; }
.rout-line { position: absolute; left: 770px; top: 0; bottom: 0; width: 1px; background: #40e0d0; }
.trace { position: absolute; left: 801px; top: 444px; width: 799px; height: 22px; background: #469500; }
.pad-gold { position: absolute; left: 794px; top: 449px; width: 7px; height: 16px; background: #a8901a; border-radius: 8px 0 0 8px; }
.pad-dot { position: absolute; left: 794px; top: 437px; width: 14px; height: 14px; border-radius: 50%; background: conic-gradient(#fff 0 25%, #b070f0 25% 50%, #5050ff 50% 62%, #00ffff 62% 100%); }
.glyph { position: absolute; top: 657px; font: 400 245px/245px "Liberation Sans", sans-serif; color: #469500; -webkit-text-stroke: 2px #469500; }
.gj { left: 1212px; transform: scaleX(1.2); transform-origin: left center; }
.gs { left: 1353px; }
.ga { left: 1508px; }
.pcb { position: absolute; }
.pcb-left { left: 981px; top: 212px; width: 8px; height: 560px; background: repeating-linear-gradient(180deg, #a8840a 0 2px, #000 2px 4px, #a8840a 4px 6px, #000 6px 10px); }
.pcb-top { left: 990px; top: 213px; width: 450px; height: 6px; background: repeating-linear-gradient(90deg, #000 0 14px, #8a6c08 14px 15px, #000 15px 26px, #c02010 26px 27px, #000 27px 38px); }
.pcb-bot { left: 1000px; top: 787px; width: 270px; height: 8px; background: repeating-linear-gradient(90deg, #a8840a 0 2px, #000 2px 5px, #a8840a 5px 7px, #000 7px 12px, #a8840a 12px 24px, #000 24px 44px); }
.pcb-vt { left: 233px; top: 157px; width: 260px; height: 1px; background: repeating-linear-gradient(90deg, #8a6c08 0 6px, #000 6px 16px); }
.gold { position: absolute; background: #a8840a; top: 766px; height: 7px; }
.g-a { left: 246px; width: 8px; }
.g-b { left: 265px; width: 8px; }
.g-c { left: 286px; width: 30px; }
.g-d { left: 321px; width: 85px; }
.g-e { left: 413px; width: 40px; }

/* right column */
.right { width: 163px; flex: none; background: #2b5f58; display: flex; flex-direction: column; margin-bottom: 2px; }
.tools { display: grid; grid-template-columns: repeat(4, 38px); grid-auto-rows: 38px; gap: 2px; padding-left: 2px; }
.t1 { padding-top: 3px; height: 163px; border-bottom: 2px solid #b8ece0; }
.t2 { background: #000; padding-top: 4px; height: 246px; border-bottom: 4px solid #808080; }
.tb { width: 38px; height: 38px; border: 3px solid; border-color: #c9efef #5b8b8b #5b8b8b #c9efef; background: #9fdadb; }
.tb-g { background: #c8c8c8; border-color: #efefef #808080 #808080 #efefef; }
.tb-w { background: #fff; border-color: #fff; }
.tb-o { background: #ffc84b; border-color: #ffe29a #9a7a30 #9a7a30 #ffe29a; }
.tb-red .fr { outline: 2px solid #ff0000; outline-offset: -1px; }
.fr { width: 100%; height: 100%; border: 1px solid #000; overflow: hidden; }
.fr svg { display: block; width: 100%; height: 100%; }
.fr-k { background: #000; }
.k1 { fill: none; stroke: #000; stroke-width: 1; }
.k2 { fill: none; stroke: #000; stroke-width: 1.600; }
.k3 { fill: none; stroke: #000; stroke-width: 2.600; }
.tiny { font: 700 6px "Liberation Sans", sans-serif; }
.tinyb { font: 700 8px "Liberation Sans", sans-serif; fill: #00f; text-anchor: middle; }
.ratio { font: 700 15px "Liberation Sans", sans-serif; text-anchor: middle; }
.overview { height: 434px; flex: none; background: #000; border-left: 2px solid #2b7f70; border-right: 1px solid #b8ece0; padding-top: 141px; }
.ov-box { height: 153px; border-top: 1px solid #469500; border-bottom: 1px solid #469500; border-left: 1px solid #469500; padding: 34px 8px 0 6px; }
.ov-board { height: 104px; border: 2px solid #fff; border-radius: 3px 3px 3px 0; position: relative; }
.ov-mark { position: absolute; left: -3px; top: 5px; width: 6px; height: 3px; background: #ff2020; }
.ov-x { position: absolute; left: -4px; bottom: -4px; width: 8px; height: 8px; }
.coords { flex: 1; background: #52cdaf; border-top: 2px solid #b8ece0; box-shadow: inset 0 2px 0 #2b5f58; border-left: 2px solid #2b7f70; padding: 7px 0 0 2px; font-size: 15px; line-height: 14.500px; white-space: pre; }

/* bottom strip */
.bottom { height: 13px; flex: none; display: flex; background: #000; overflow: hidden; }
.bbtn { height: 13px; background: #ffffd0; border: 3px solid #c8c8a0; border-bottom: 0; position: relative; flex: none; }
.bbtn i { position: absolute; left: 7px; top: 5px; width: 12px; height: 6px; border: 1px solid #000; }
.w1 { width: 24px; margin-right: 2px; }
.w2 { width: 30px; margin-right: 2px; }
.w3 { width: 30px; }
.w5 { width: 31px; margin: 0 1px; }
.teal { border-color: #52cdaf; box-shadow: inset 0 0 0 2px #b8b89a; }
.bcream { height: 13px; background: #ffffd0; flex: none; }
.w4 { width: 47px; }
.binput { width: 172px; height: 13px; flex: none; background: #ffffd0; border: 2px solid #a8a880; border-bottom: 0; margin-left: 2px; }
.bcream.grow { flex: 1; }
.bteal { width: 79px; flex: none; height: 13px; background: #52cdaf; border: 2px solid #8fe4cf; border-bottom: 0; box-shadow: inset 0 0 0 1px #2b7f70; }

/* windows */
.win { position: absolute; background: #52cdaf; display: flex; flex-direction: column; }
.rv { left: 105px; top: 237px; width: 495px; height: 608px; }
.rh { left: 1136px; top: 298px; width: 463px; height: 570px; }
.wintitle { height: 30px; flex: none; background: #fff; display: flex; align-items: center; padding-left: 8px; }
.wintitle.tall { height: 31px; padding-left: 9px; }
.appicon.big { width: 16px; height: 16px; }
.wt-text { margin-left: 5px; font: 400 12.500px "Noto Sans", sans-serif; color: #8c8c8c; }
.wt-text.active { color: #222; }
.winx { width: 11px; height: 11px; margin-left: auto; margin-right: 10px; }
.btn { display: flex; align-items: center; justify-content: center; padding: 0; margin: 0; font: 700 15px "Liberation Mono", monospace; color: #0a1a1a; background: #9fdadb; border: 2px solid; border-color: #c9efef #5b8b8b #5b8b8b #c9efef; white-space: pre; flex: none; }
.it { font-style: italic; }
.dd { display: block; width: 12px; height: 6px; background: #9fdadb; border: 1px solid; border-color: #c9efef #5b8b8b #5b8b8b #c9efef; flex: none; }
.banner { height: 27px; margin: 1px 3px 0; flex: none; background: #52cdaf; border: 2px solid; border-color: #9feee0 #2b7f70 #2b7f70 #9feee0; text-align: center; font: 700 14px/23px "Liberation Serif", serif; color: #0a1a1a; }
.rv-mid { display: flex; height: 472px; flex: none; margin-top: 1px; border-bottom: 2px solid #000; }
.rv-l { width: 168px; flex: none; display: flex; flex-direction: column; }
.rv-head { height: 31px; flex: none; display: flex; align-items: center; padding: 0 0 0 3px; background: #52cdaf; }
.none { width: 47px; height: 28px; font-weight: 400; font-size: 15px; }
.all { width: 37px; height: 28px; font-weight: 400; margin-left: 2px; }
.rv-layers { width: 76px; height: 29px; margin-left: 2px; background: #9fdadb; font-style: italic; text-align: center; line-height: 29px; }
.rv-listwrap { height: 390px; flex: none; display: flex; padding-left: 1px; }
.list { border: 2px solid; border-color: #2b7f70 #9feee0 #9feee0 #2b7f70; background: #52cdaf; overflow: hidden; }
.rvlist-l { width: 155px; padding: 2px 4px; }
.sel { height: 15px; background: #000; color: #52cdaf; line-height: 16px; margin-bottom: 3px; white-space: pre; }
.vs { width: 13px; margin-left: 3px; display: flex; flex-direction: column; background: #52cdaf; flex: none; }
.vs b { flex: 1; display: block; margin: 1px; border: 2px solid; border-color: #9feee0 #2b7f70 #2b7f70 #9feee0; }
.vs i, .hs i { display: block; flex: none; width: 12px; height: 12px; background: #3aa58e; }
.au { clip-path: polygon(50% 0, 100% 100%, 0 100%); }
.ad { clip-path: polygon(0 0, 100% 0, 50% 100%); }
.al { clip-path: polygon(0 50%, 100% 0, 100% 100%); }
.ar { clip-path: polygon(0 0, 100% 50%, 0 100%); }
.vs.lt { background: #9fdadb; }
.vs.lt b { border-color: #c9efef #5b8b8b #5b8b8b #c9efef; }
.vs.lt i { background: #6fa8a8; }
.hs { height: 14px; flex: none; display: flex; align-items: center; margin-top: 2px; }
.hs b { flex: 1; display: block; height: 12px; border: 2px solid; border-color: #9feee0 #2b7f70 #2b7f70 #9feee0; margin: 0 1px; }
.hs-l { width: 153px; margin-left: 2px; }
.replace { flex: 1; display: flex; align-items: center; padding-left: 8px; border-top: 2px solid #000; border-right: 2px solid #000; background: #52cdaf; width: 170px; }
.repl { width: 159px; height: 28px; gap: 7px; }
.rv-r { flex: 1; min-width: 0; border-left: 2px solid #000; margin-left: 1px; display: flex; flex-direction: column; }
.rv-head2 { height: 31px; flex: none; display: flex; align-items: center; padding: 0 0 0 1px; background: linear-gradient(90deg, #52cdaf 208px, #9fdadb 208px); }
.cats { width: 207px; height: 28px; }
.meas { width: 52px; text-align: left; }
.ddb { width: 59px; height: 27px; justify-content: flex-start; padding-left: 5px; gap: 9px; }
.rv-listwrap2 { height: 326px; flex: none; display: flex; }
.rvlist-r { width: 302px; padding: 4px 3px; }
.sel.wide { margin-bottom: 3px; }
.it-row { height: 18px; line-height: 16px; white-space: pre; }
.hs-r { width: 300px; margin-top: 5px; }
.navrow { height: 28px; flex: none; display: flex; align-items: center; gap: 4px; padding-left: 3px; }
.navrow .nav { width: 44px; height: 23px; }
.navrow .nav:first-child { width: 53px; }
.idx { width: 54px; }
.idxval { width: 60px; height: 25px; border: 2px solid #fff; font-weight: 400; padding-left: 6px; line-height: 17px; }
.zoomrow { height: 33px; flex: none; display: flex; }
.zoomgroup { width: 221px; flex: none; display: flex; align-items: center; border: 1px solid #000; border-left: 0; background: #52cdaf; padding-left: 7px; }
.azoom { width: 115px; height: 28px; gap: 8px; }
.sv { height: 31px; width: 31px; margin-left: 3px; background: #9fdadb; line-height: 31px; padding-left: 1px; flex: none; }
.svgreen { width: 65px; height: 31px; background: #1ae81a; padding: 2px 0 2px 5px; flex: none; }
.svbtn { width: 58px; height: 27px; background: #1ae81a; justify-content: flex-end; padding-right: 8px; }
.showall { display: flex; align-items: flex-start; padding: 6px 0 0 5px; gap: 3px; font-size: 14.500px; line-height: 13px; white-space: pre; }
.chk { width: 13px; height: 13px; border: 1px solid; border-color: #2b7f70 #9feee0 #9feee0 #2b7f70; flex: none; }
.actrow { flex: 1; display: flex; justify-content: flex-end; align-items: center; gap: 4px; padding-right: 1px; }
.ib { width: 30px; height: 30px; border: 2px solid; border-color: #c9efef #5b8b8b #5b8b8b #c9efef; background: #9fdadb; padding: 2px; flex: none; }
.ib-w { width: 34px; }
.fr-s, .fr-w, .fr-b { width: 100%; height: 100%; }
.fr-ink { background: #000; }
.fr-redb { outline: 2px solid #f01010; }
.lbl { font: 400 11.500px "Liberation Mono", monospace; text-anchor: middle; fill: #000; }
.half { font: 700 10px "Liberation Sans", sans-serif; }
.statusrow { height: 21px; flex: none; text-align: center; line-height: 19px; font-size: 15px; padding-right: 2px; border-bottom: 2px solid #000; white-space: pre; }
.erfrow { height: 19px; flex: none; background: #ffffd0; padding-left: 1px; line-height: 19px; white-space: pre; }
.closerow { flex: 1; display: flex; align-items: center; gap: 4px; padding: 0 2px; background: #9fdadb; border-top: 2px solid #8fe4cf; }
.closebtn { width: 287px; height: 29px; }

/* histogram */
.rh-top { height: 291px; flex: none; display: flex; padding: 5px 6px 0 5px; }
.rh-left { width: 101px; height: 286px; flex: none; border: 2px solid #103030; background: #9fdadb; display: flex; flex-direction: column; }
.radios { height: 135px; flex: none; border-bottom: 2px solid #103030; }
.radio { height: 27px; display: flex; align-items: center; padding: 0 0 3px 5px; gap: 5px; font-size: 14.500px; white-space: pre; }
.dia { width: 11px; height: 11px; margin: 0 0 0 1px; transform: rotate(45deg); flex: none; border: 2px solid; border-color: #c9efef #6c9a9a #6c9a9a #c9efef; background: #9fdadb; }
.dia.on { background: #d01060; }
.rh-listwrap { height: 114px; flex: none; display: flex; }
.rh-list { width: 81px; border: 2px solid; border-color: #6c9a9a #c9efef #c9efef #6c9a9a; padding: 3px 2px; }
.selh { display: inline-block; height: 15px; background: #000; color: #9fdadb; line-height: 15px; width: 72px; white-space: pre; }
.rh-btns { flex: 1; display: flex; gap: 4px; padding: 2px 0 0 1px; align-items: flex-start; border-top: 1px solid #c9efef; }
.rh-btns .ib.lt { width: 31px; height: 30px; padding: 2px; }
.rh-chart { width: 348px; margin-left: 3px; height: 286px; flex: none; background: #9fdadb; border-top: 2px solid #5b8b8b; border-right: 1px solid #5b8b8b; display: flex; flex-direction: column; position: relative; }
.chart-title { width: 259px; height: 21px; flex: none; margin: 2px 0 0 45px; background: #b0f4f8; border: 1px solid #103030; box-shadow: 2px 2px 0 #6c9a9a; font-style: italic; font-size: 15px; line-height: 23px; padding-left: 2px; white-space: pre; overflow: hidden; }
.bars { height: 140px; flex: none; display: flex; padding-left: 6px; align-items: stretch; }
.barcol { width: 55px; display: flex; flex-direction: column; justify-content: flex-end; align-items: center; flex: none; }
.bv { line-height: 15px; font-weight: 400; -webkit-text-stroke: .3px #000; color: #000; }
.bv.zero { color: #f01818; -webkit-text-stroke-color: #f01818; line-height: 14px; margin-bottom: 0; }
.bar { width: 55px; border: 1px solid #000; border-bottom: 0; border-right: 0; }
.barcol:last-child .bar { border-right: 1px solid #000; }
.red { background: #ff1a1a; }
.yel { background: #ffff1a; }
.grn { background: #1ae81a; }
.bins { height: 34px; flex: none; display: flex; padding-left: 5px; border-top: 4px solid #000; padding-top: 1px; }
.bin { width: 55px; height: 29px; border: 1px solid #000; border-right: 0; font-weight: 400; -webkit-text-stroke: .3px #000; line-height: 14px; padding: 2px 0 0 18px; display: flex; flex-direction: column; flex: none; }
.bin:last-child { border-right: 1px solid #000; }
.n2 { margin-left: 9px; line-height: 15px; }
.hs-h { height: 14px; margin: 8px 0 0 2px; width: 344px; background: #84b4b4; }
.hs-h i { background: #9fdadb; }
.hs-h b { flex: none; width: 246px; background: #9fdadb; border-color: #c9efef #5b8b8b #5b8b8b #c9efef; margin: 0; }
.hs-h u { flex: 1; display: block; }
.rh-sub { flex: 1; display: flex; margin: 1px 0 0 1px; border: 2px solid #000; background: #9fdadb; min-height: 0; }
.rh-slist { width: 75px; flex: none; display: flex; flex-direction: column; padding: 4px 3px; border-right: 2px solid #c9efef; }
.rh-slist .selh { width: 63px; overflow: hidden; }
.plain { line-height: 24px; }
.vs-s { width: 14px; margin-left: 2px; }
.reso { flex: 1; display: flex; flex-direction: column; padding-left: 1px; margin-left: 2px; min-width: 0; }
.reso-t { text-align: center; line-height: 18px; margin-top: 1px; font-weight: 400; -webkit-text-stroke: .3px #000; }
.reso-v { margin-left: 23px; line-height: 18px; margin-top: 5px; font-weight: 400; -webkit-text-stroke: .3px #000; }
.slider { width: 245px; height: 14px; background: #84b4b4; border: 1px solid #5b8b8b; padding-left: 20px; margin-top: 1px; }
.slider b { display: block; width: 30px; height: 12px; background: linear-gradient(90deg, #9fdadb 14px, #5b8b8b 14px 15px, #9fdadb 15px); border: 1px solid #c9efef; }
.sash { height: 8px; flex: none; position: relative; background: #52cdaf; border-top: 2px solid #8fe4cf; margin: -1px 2px 0; }
.sash i { position: absolute; right: 7px; top: -3px; width: 9px; height: 9px; background: #9fdadb; border: 1px solid #2b7f70; }
.preview { height: 162px; flex: none; margin: 4px 6px 0 5px; border: 2px solid #103030; border-right: 1px solid #103030; border-bottom: 1px solid #103030; display: flex; padding: 18px 0 0 139px; }
.board { width: 172px; height: 122px; display: block; }
.rh-status { height: 45px; flex: none; display: flex; align-items: center; padding: 2px 4px 0 6px; gap: 4px; }
.ib.lt { width: 30px; height: 38px; padding: 6px 2px; }
.rh-status .ib.big { width: 38px; height: 38px; padding: 2px; }
.msg { width: 303px; height: 41px; flex: none; border: 1px solid #103030; background: #9fdadb; line-height: 39px; padding-left: 3px; font-size: 14.800px; margin-left: -2px; white-space: pre; }
.msg + .ib.big { margin-left: -1px; }
.hclose { height: 24px; margin: 5px 1px 1px 2px; width: 460px; }
```
